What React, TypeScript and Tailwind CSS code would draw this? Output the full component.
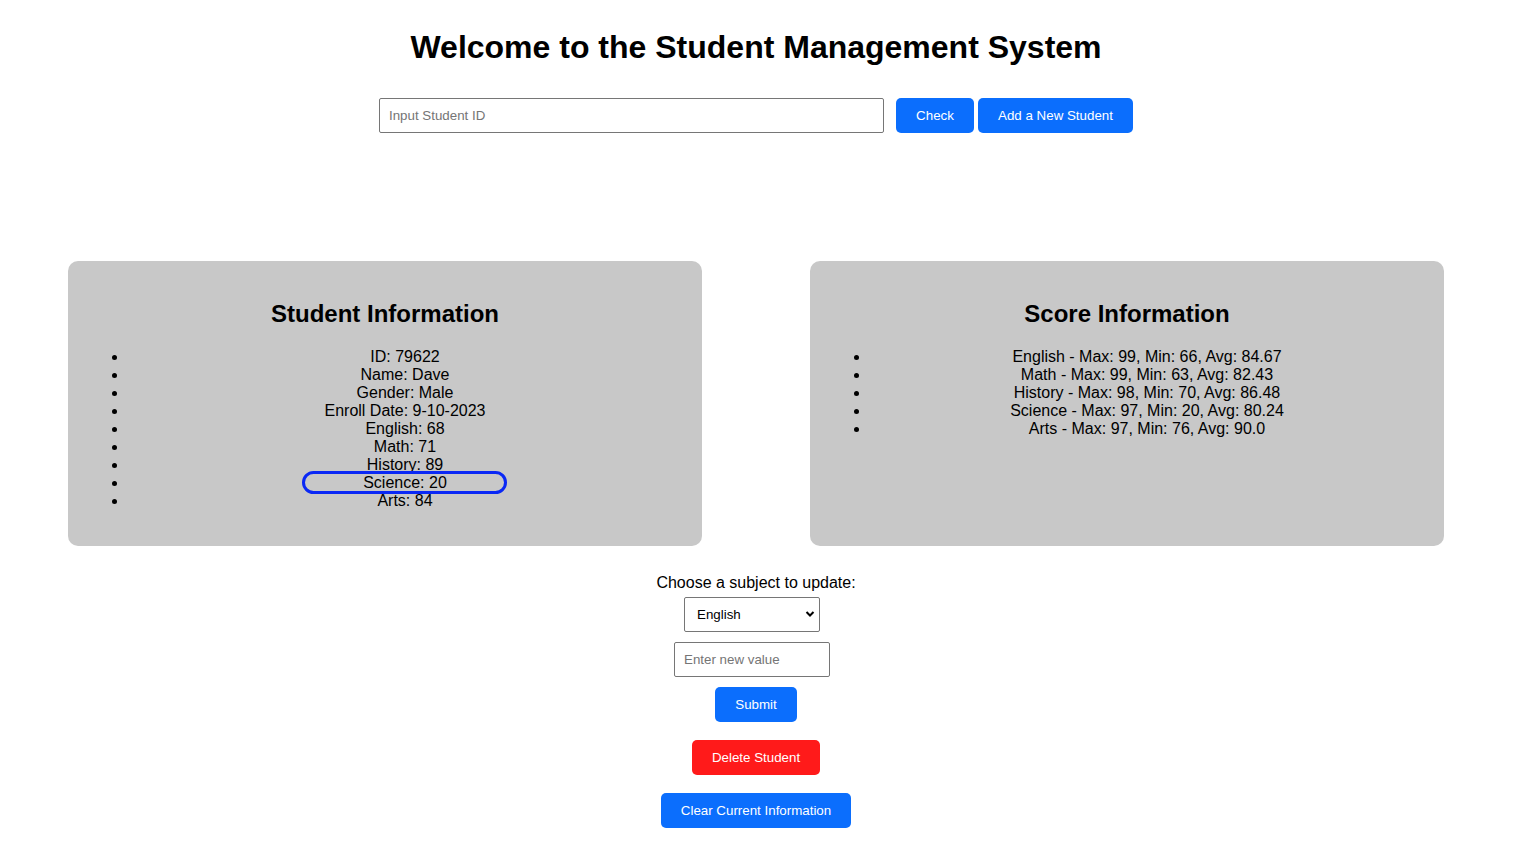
import { useState } from 'react';

const studentInfo = [
  'ID: 79622',
  'Name: Dave',
  'Gender: Male',
  'Enroll Date: 9-10-2023',
  'English: 68',
  'Math: 71',
  'History: 89',
  'Science: 20',
  'Arts: 84',
];

const scoreInfo = [
  'English - Max: 99, Min: 66, Avg: 84.67',
  'Math - Max: 99, Min: 63, Avg: 82.43',
  'History - Max: 98, Min: 70, Avg: 86.48',
  'Science - Max: 97, Min: 20, Avg: 80.24',
  'Arts - Max: 97, Min: 76, Avg: 90.0',
];

function InfoCard({ title, items, highlight }: { title: string; items: string[]; highlight?: string }) {
  return (
    <div className="flex-1 bg-[#c8c8c8] rounded-[10px] p-5">
      <h2 className="mt-[19px] text-center text-[24px] leading-[28px] font-bold">{title}</h2>
      <ul className="list-disc pl-10 mt-5 mb-4">
        {items.map((item) => (
          <li key={item} className="relative text-center text-base leading-[18px]">
            {item}
            {item === highlight && (
              <span className="pointer-events-none absolute left-[174px] -top-[3px] w-[205px] h-[23px] border-[3px] border-[#0a28f5] rounded-full" />
            )}
          </li>
        ))}
      </ul>
    </div>
  );
}

export default function App() {
  const [studentId, setStudentId] = useState('');
  const [subject, setSubject] = useState('English');
  const [newValue, setNewValue] = useState('');

  return (
    <div className="w-[1512px] min-h-screen bg-white text-black font-['Liberation_Sans',Arial,sans-serif] pt-[29px] pb-8">
      <h1 className="text-center text-[32px] leading-[37px] font-bold">Welcome to the Student Management System</h1>

      {/* search row */}
      <div className="mt-8 flex justify-center">
        <input
          value={studentId}
          onChange={(e) => setStudentId(e.target.value)}
          placeholder="Input Student ID"
          className="w-[505px] h-[35px] border border-[#767676] rounded-[2px] pl-[9px] text-[13.33px] placeholder:text-[#757575] outline-none"
        />
        <button className="ml-3 w-[78px] h-[35px] bg-[#0b6efd] text-white text-[13.33px] rounded-[5px]">Check</button>
        <button className="ml-1 w-[155px] h-[35px] bg-[#0b6efd] text-white text-[13.33px] rounded-[5px]">Add a New Student</button>
      </div>

      {/* cards */}
      <div className="mt-32 px-[68px] flex gap-[108px]">
        <InfoCard title="Student Information" items={studentInfo} highlight="Science: 20" />
        <InfoCard title="Score Information" items={scoreInfo} />
      </div>

      {/* update form */}
      <div className="mt-[28px] flex flex-col items-center">
        <label className="text-base leading-[18px]">Choose a subject to update:</label>
        <div className="relative mt-[5px] mr-2">
          <select
            value={subject}
            onChange={(e) => setSubject(e.target.value)}
            className="appearance-none w-[136px] h-[35px] border border-[#767676] rounded-[2px] pl-3 text-[13.33px] bg-white outline-none"
          >
            <option>English</option>
            <option>Math</option>
            <option>History</option>
            <option>Science</option>
            <option>Arts</option>
          </select>
          <svg className="pointer-events-none absolute right-[5px] top-[13px]" width="10" height="8" viewBox="0 0 10 8">
            <path d="M1.5 2 L5 5.5 L8.5 2" fill="none" stroke="#000" strokeWidth="2" />
          </svg>
        </div>
        <input
          value={newValue}
          onChange={(e) => setNewValue(e.target.value)}
          placeholder="Enter new value"
          className="mt-[10px] mr-2 w-[156px] h-[35px] border border-[#767676] rounded-[2px] pl-[9px] text-[13.33px] placeholder:text-[#757575] outline-none"
        />
        <button className="mt-[10px] w-[82px] h-[35px] bg-[#0b6efd] text-white text-[13.33px] rounded-[5px]">Submit</button>
        <button className="mt-[18px] w-[128px] h-[35px] bg-[#ff1a1a] text-white text-[13.33px] rounded-[5px]">Delete Student</button>
        <button className="mt-[18px] w-[190px] h-[35px] bg-[#0b6efd] text-white text-[13.33px] rounded-[5px]">Clear Current Information</button>
      </div>
    </div>
  );
}
